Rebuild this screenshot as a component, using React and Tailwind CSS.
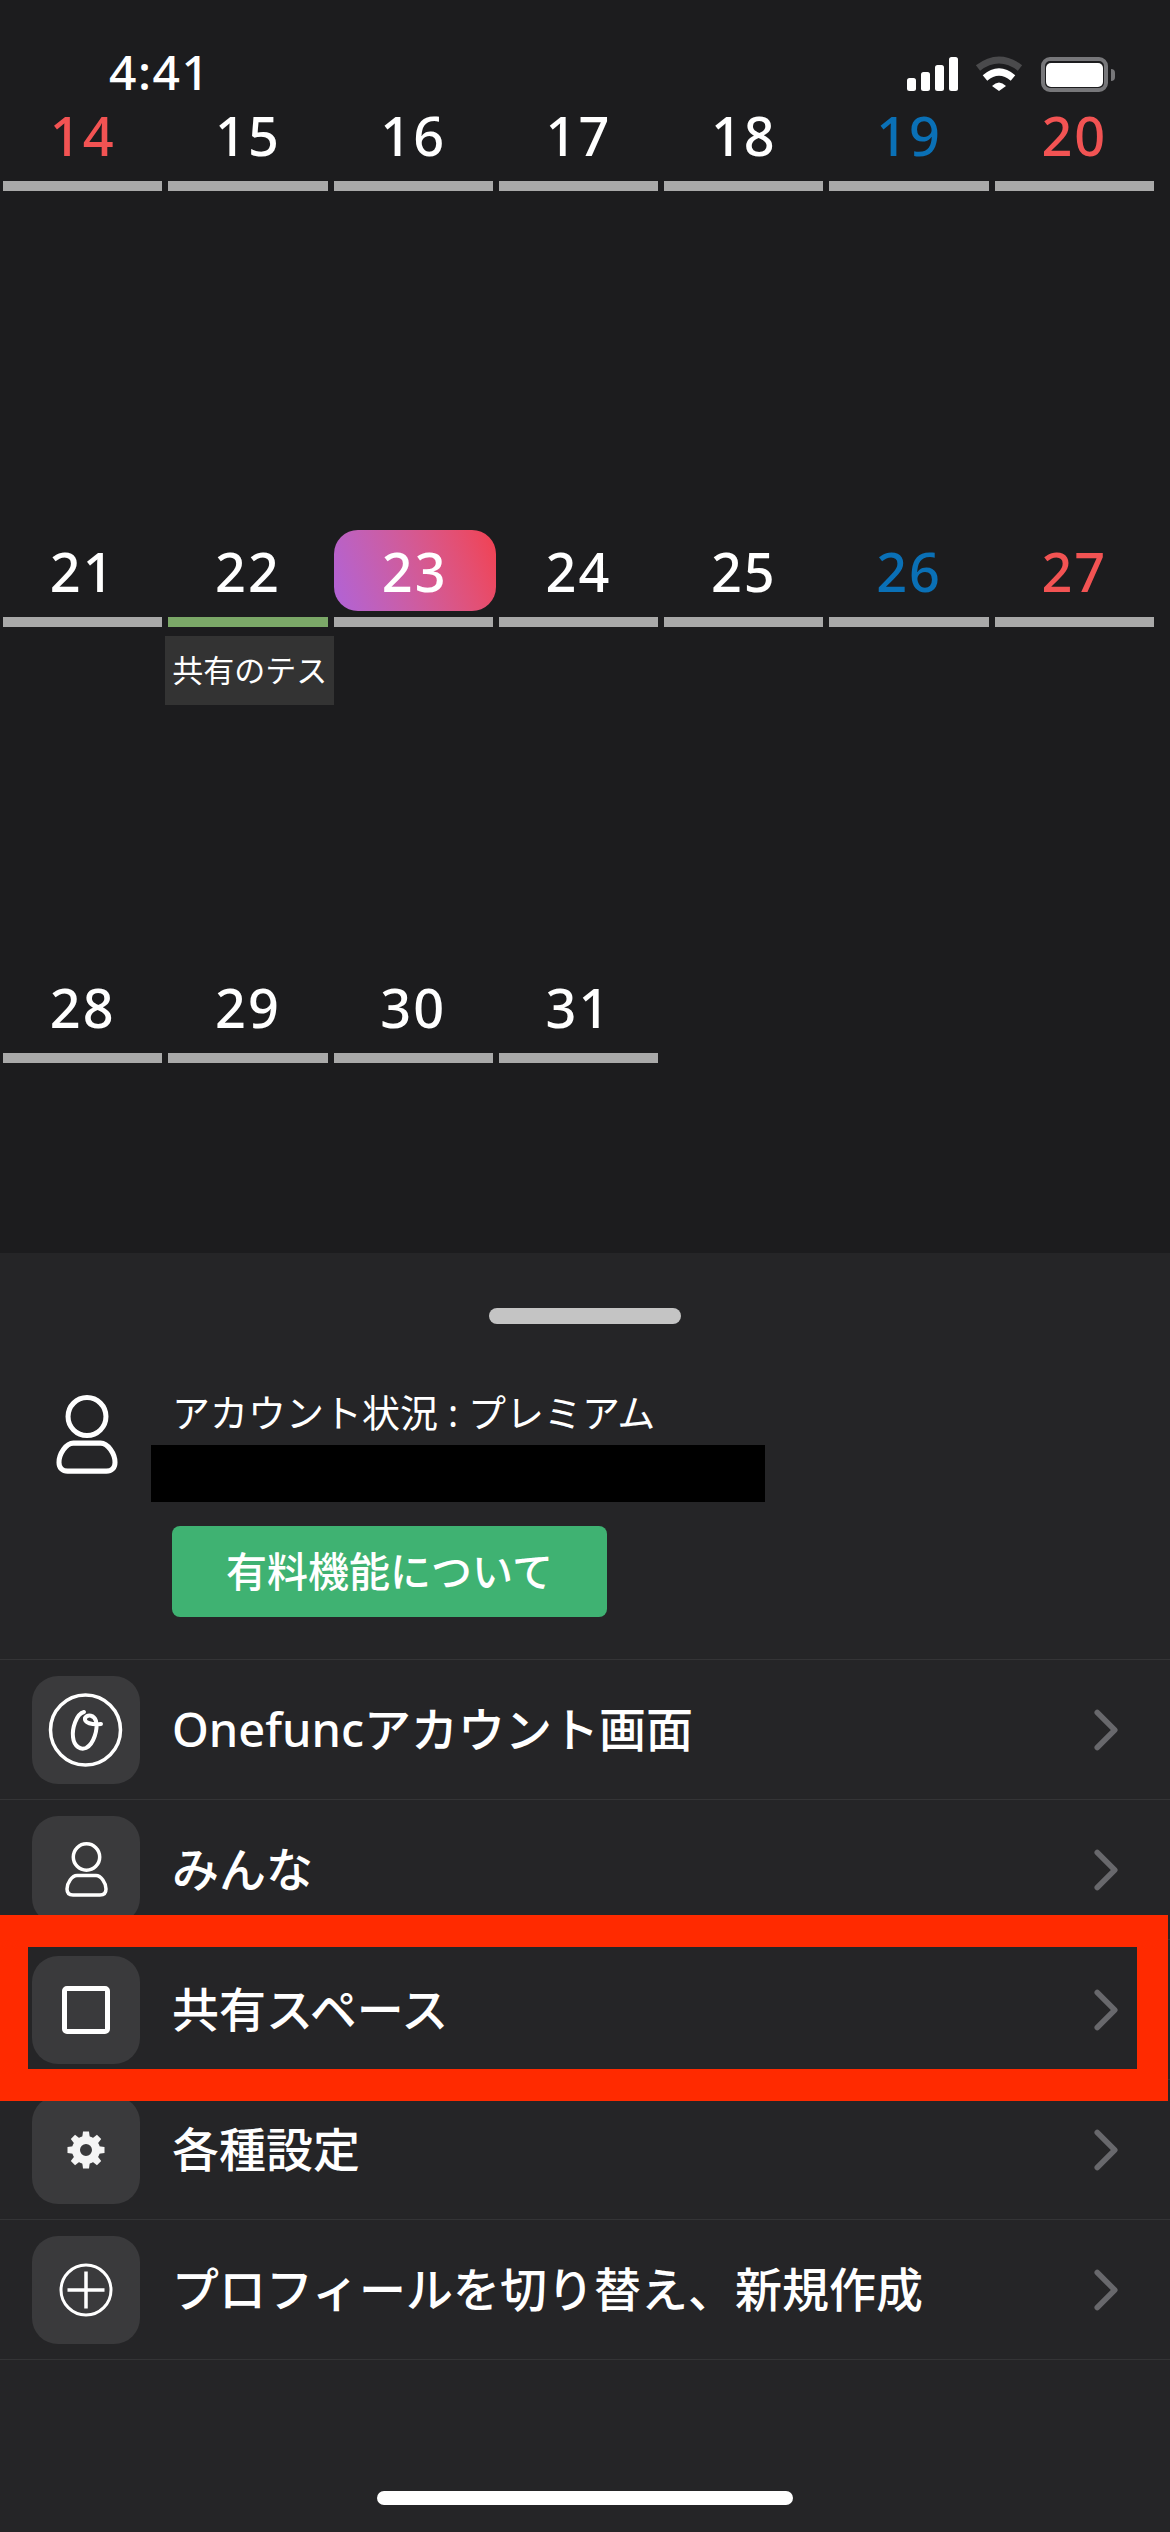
import React from 'react';
import { ChevronRight } from 'lucide-react';

const FONT = '[font-family:"Noto_Sans","Noto_Sans_CJK_JP",sans-serif]';

const WEEKS = [
  [14, 15, 16, 17, 18, 19, 20],
  [21, 22, 23, 24, 25, 26, 27],
  [28, 29, 30, 31],
];

// only the 14th and the right-hand column are red, the 19th and 26th blue
function dayColor(day, col) {
  if (day === 14 || col === 6) return 'text-[#f25353]';
  if (col === 5) return 'text-[#0a70b6]';
  return 'text-white';
}

function StatusBar() {
  return (
    <div className="flex h-[94px] items-start">
      <span className="ml-[109px] mt-[45px] text-[48px] leading-[54px] font-medium tracking-[1.5px] text-white">4:41</span>
      <div className="ml-auto mr-[55px] mt-[55px] flex items-start">
        <svg width="52" height="36" viewBox="0 0 52 36" fill="#fff">
          <rect x="0" y="23" width="9" height="13" rx="2.5" />
          <rect x="14" y="17" width="9" height="19" rx="2.5" />
          <rect x="28" y="10" width="9" height="26" rx="2.5" />
          <rect x="42" y="2" width="9" height="34" rx="2.5" />
        </svg>
        <svg className="ml-[16px]" width="48" height="36" viewBox="0 0 48 36" fill="none">
          <path d="M3 13 Q24 -3 45 13" stroke="#4a4a4c" strokeWidth="7" />
          <path d="M10 23 Q24 11 38 23" stroke="#fff" strokeWidth="7" />
          <path d="M17 31 Q24 24 31 31 L24 36Z" fill="#fff" />
        </svg>
        <div className="ml-[18px] mt-[2px] flex items-center">
          <div className="flex h-[35px] w-[67px] items-center justify-center rounded-[9px] border-[4px] border-[#77777a]">
            <div className="h-[24px] w-[57px] rounded-[5px] bg-white" />
          </div>
          <div className="ml-[3px] h-[12px] w-[4px] rounded-r-full bg-[#77777a]" />
        </div>
      </div>
    </div>
  );
}

function DayCell({ day, col }) {
  const isToday = day === 23;
  const hasEvent = day === 22;
  return (
    <div className="relative px-[3px]">
      <div
        className={`flex h-[81px] items-center justify-center pt-[2px] text-[54px] font-medium tracking-[2px] ${
          isToday
            ? '-mr-[3px] rounded-[24px] bg-linear-70 from-[#b062d8] to-[#f2404f] text-white'
            : dayColor(day, col)
        }`}
      >
        {day}
      </div>
      <div className={`mt-[6px] h-[10px] ${hasEvent ? 'bg-[#7ba868]' : 'bg-[#a9a9a9]'}`} />
      {hasEvent && (
        <div className="absolute left-0 top-[106px] flex h-[69px] w-[169px] items-center justify-center whitespace-nowrap bg-[#333333] text-[31px] text-white">
          共有のテス
        </div>
      )}
    </div>
  );
}

function PersonIcon({ className }) {
  return (
    <svg className={className} viewBox="0 0 43 55" fill="none" stroke="#fff" strokeWidth="3.5">
      <circle cx="21.5" cy="15" r="13.2" />
      <path d="M12 33.5 H31 C36 33.5 41 41 41 47 C41 51 38.5 53 35 53 H8 C4.5 53 2 51 2 47 C2 41 7 33.5 12 33.5Z" />
    </svg>
  );
}

function OnefuncIcon() {
  return (
    <svg width="90" height="90" viewBox="0 0 90 90" fill="none" stroke="#fff">
      <g transform="translate(-1 -4)">
        <circle cx="45.5" cy="49" r="35" strokeWidth="3.5" />
        <path
          d="M44 31 C36 33 32 48 33 56 C34 66 41 69 46 67 C54 63 58 48 56 40 C54 34 48 33 45 37 C44 42 52 44 61 43"
          strokeWidth="4"
          strokeLinecap="round"
        />
      </g>
    </svg>
  );
}

function GearIcon() {
  return (
    <svg width="38" height="38" viewBox="0 0 38 38" fill="#f5f5f5">
      <circle cx="19" cy="19" r="10" fill="none" stroke="#f5f5f5" strokeWidth="8" />
      {[0, 45, 90, 135, 180, 225, 270, 315].map((a) => (
        <path key={a} d="M15 8 L16 0.5 H22 L23 8Z" transform={`rotate(${a} 19 19)`} />
      ))}
    </svg>
  );
}

function PlusIcon() {
  return (
    <svg width="54" height="54" viewBox="0 0 54 54" fill="none" stroke="#fff">
      <circle cx="27" cy="27" r="25" strokeWidth="3" />
      <path d="M27 8.5 V45.5 M8.5 27 H45.5" strokeWidth="3.5" />
    </svg>
  );
}

const MENU = [
  { label: 'Onefuncアカウント画面', icon: <OnefuncIcon /> },
  { label: 'みんな', icon: <PersonIcon className="h-[55px] w-[43px]" /> },
  { label: '共有スペース', icon: <div className="size-[48px] rounded-[5px] border-[5px] border-white" /> },
  { label: '各種設定', icon: <GearIcon /> },
  { label: 'プロフィールを切り替え、新規作成', icon: <PlusIcon /> },
];

export default function App() {
  return (
    <div className={`relative flex h-[2532px] w-[1170px] flex-col overflow-hidden bg-[#1c1c1e] ${FONT}`}>
      <div className="h-[1253px] shrink-0">
        <StatusBar />
        {WEEKS.map((week) => (
          <div key={week[0]} className="grid h-[436px] w-[1157px] grid-cols-7 content-start">
            {week.map((day, col) => (
              <DayCell key={day} day={day} col={col} />
            ))}
          </div>
        ))}
      </div>

      <div className="flex flex-1 flex-col bg-[#252527]">
        <div className="mx-auto mt-[55px] h-[16px] w-[192px] rounded-full bg-[#c4c4c4]" />

        <div className="mt-[71px] flex items-start pb-[42px] pl-[56px]">
          <PersonIcon className="h-[79px] w-[62px] shrink-0" />
          <div className="ml-[54px] flex flex-col items-start">
            <span className="h-[34px] whitespace-nowrap text-[38px] leading-[34px] text-white">
              アカウント状況 : プレミアム
            </span>
            <div className="-ml-[21px] mt-[16px] h-[57px] w-[614px] bg-black" />
            <div className="mt-[24px] flex h-[91px] w-[435px] items-center justify-center rounded-[8px] bg-[#3fb272] text-[41px] font-medium text-white">
              有料機能について
            </div>
          </div>
        </div>

        <div className="border-t border-[#343436]">
          {MENU.map((item) => (
            <div key={item.label} className="flex h-[140px] items-center border-b border-[#343436] pl-[32px]">
              <div className="flex size-[108px] items-center justify-center rounded-[26px] bg-[#3a3a3c]">
                {item.icon}
              </div>
              <span className="ml-[32px] whitespace-nowrap text-[47px] font-medium text-white">{item.label}</span>
              <ChevronRight className="ml-auto mr-[29px] size-[70px] text-[#68686c]" strokeWidth={1.9} />
            </div>
          ))}
        </div>

        <div className="mx-auto mt-[131px] h-[14px] w-[416px] rounded-full bg-white" />
      </div>

      <div className="absolute left-0 top-[1915px] h-[186px] w-[1168px] border-y-[32px] border-r-[31px] border-l-[28px] border-[#ff2a00]" />
    </div>
  );
}
